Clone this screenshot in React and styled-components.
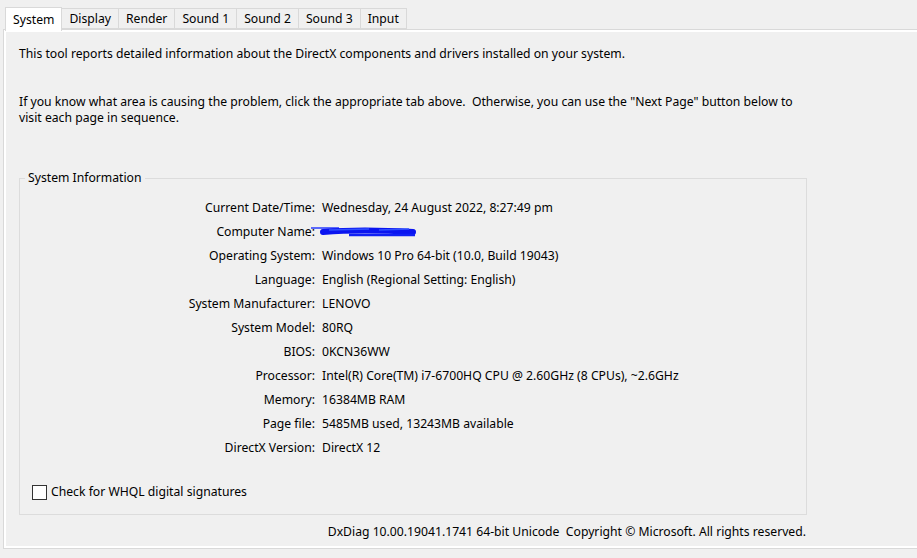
import React from "react";
import styled, { createGlobalStyle } from "styled-components";

const Global = createGlobalStyle`
  html, body { margin: 0; padding: 0; background: #f0f0f0; }
  body { font-family: "Noto Sans", "Open Sans", sans-serif; font-size: 12.2px; color: #000; }
`;

const Window = styled.div`
  width: 917px;
  height: 558px;
  overflow: hidden;
  background: #f0f0f0;
`;

const TabStrip = styled.div`
  display: flex;
  align-items: flex-end;
  height: 30px;
  padding-left: 5px;
  position: relative;
  z-index: 1;
`;

const Tab = styled.div`
  box-sizing: border-box;
  height: ${(p) => (p.$active ? "24px" : "21px")};
  margin-bottom: ${(p) => (p.$active ? "-1px" : "1px")};
  padding: 0 7px;
  border: 1px solid #d9d9d9;
  border-bottom: ${(p) => (p.$active ? "none" : "1px solid #d9d9d9")};
  border-left: ${(p) => (p.$first || p.$active ? "1px solid #d9d9d9" : "none")};
  background: ${(p) => (p.$active ? "#ffffff" : "#f0f0f0")};
  display: flex;
  align-items: center;
  line-height: 16px;
  white-space: nowrap;
`;

const Panel = styled.div`
  margin-left: 3px;
  margin-top: -1px;
  border: 1px solid #d9d9d9;
  border-right: none;
  background: #ffffff;
  padding: 2px 0 2px 2px;
  height: 520px;
  box-sizing: border-box;
`;

const Page = styled.div`
  background: #f0f0f0;
  height: 100%;
  box-sizing: border-box;
  padding: 14px 0 0 13px;
  display: flex;
  flex-direction: column;
`;

const Para = styled.p`
  margin: 0 0 ${(p) => p.$gap || 0}px 0;
  line-height: 16px;
`;

const Group = styled.fieldset`
  margin: 0;
  width: 788px;
  box-sizing: border-box;
  border: 1px solid #dcdcdc;
  padding: 0 0 14px 0;
`;

const Legend = styled.legend`
  margin-left: 5px;
  padding: 0 3px;
  line-height: 16px;
`;

const InfoGrid = styled.div`
  display: grid;
  grid-template-columns: 295px 1fr;
  column-gap: 7px;
  grid-auto-rows: 24px;
  align-items: center;
  margin-top: 9px;
`;

const Label = styled.div`
  text-align: right;
  white-space: nowrap;
`;

const Value = styled.div`
  white-space: nowrap;
  display: flex;
  align-items: center;
`;

const CheckRow = styled.label`
  display: flex;
  align-items: center;
  gap: 4px;
  margin: 25px 0 0 12px;
  line-height: 16px;
`;

const Box = styled.span`
  width: 15px;
  height: 15px;
  border: 1px solid #333333;
  background: #ffffff;
  box-sizing: border-box;
  display: inline-block;
`;

const Footer = styled.div`
  width: 787px;
  text-align: right;
  margin-top: 9px;
  line-height: 16px;
  white-space: pre;
`;

const Scribble = styled.svg`
  margin-left: -13px;
  display: block;
`;

const tabs = ["System", "Display", "Render", "Sound 1", "Sound 2", "Sound 3", "Input"];

const rows = [
  ["Current Date/Time:", "Wednesday, 24 August 2022, 8:27:49 pm"],
  ["Computer Name:", null],
  ["Operating System:", "Windows 10 Pro 64-bit (10.0, Build 19043)"],
  ["Language:", "English (Regional Setting: English)"],
  ["System Manufacturer:", "LENOVO"],
  ["System Model:", "80RQ"],
  ["BIOS:", "0KCN36WW"],
  ["Processor:", "Intel(R) Core(TM) i7-6700HQ CPU @ 2.60GHz (8 CPUs), ~2.6GHz"],
  ["Memory:", "16384MB RAM"],
  ["Page file:", "5485MB used, 13243MB available"],
  ["DirectX Version:", "DirectX 12"],
];

export default function App() {
  return (
    <Window>
      <Global />
      <TabStrip>
        {tabs.map((t, i) => (
          <Tab key={t} $active={i === 0} $first={i === 0}>
            {t}
          </Tab>
        ))}
      </TabStrip>
      <Panel>
        <Page>
          <Para $gap={32}>
            This tool reports detailed information about the DirectX components and drivers installed on your system.
          </Para>
          <Para $gap={44}>
            If you know what area is causing the problem, click the appropriate tab above.{"\u00a0 "}Otherwise, you can use the "Next Page" button below to
            <br />
            visit each page in sequence.
          </Para>
          <Group>
            <Legend>System Information</Legend>
            <InfoGrid>
              {rows.map(([l, v]) => (
                <React.Fragment key={l}>
                  <Label>{l}</Label>
                  <Value>
                    {v === null ? (
                      <Scribble width="108" height="14" viewBox="0 0 108 14">
                        <path d="M2 4 L30 4" stroke="#2a3cff" strokeWidth="1.5" fill="none" />
                        <path d="M14 8 C40 6 70 6 104 8" stroke="#0a14f0" strokeWidth="6" fill="none" strokeLinecap="round" />
                        <path d="M20 6 L60 5 M70 6 L100 5" stroke="#3050ff" strokeWidth="1.5" fill="none" />
                        <path d="M40 11 L106 11" stroke="#1020f5" strokeWidth="2.5" fill="none" />
                      </Scribble>
                    ) : (
                      v
                    )}
                  </Value>
                </React.Fragment>
              ))}
            </InfoGrid>
            <CheckRow>
              <Box />
              Check for WHQL digital signatures
            </CheckRow>
          </Group>
          <Footer>DxDiag 10.00.19041.1741 64-bit Unicode  Copyright © Microsoft. All rights reserved.</Footer>
        </Page>
      </Panel>
    </Window>
  );
}
